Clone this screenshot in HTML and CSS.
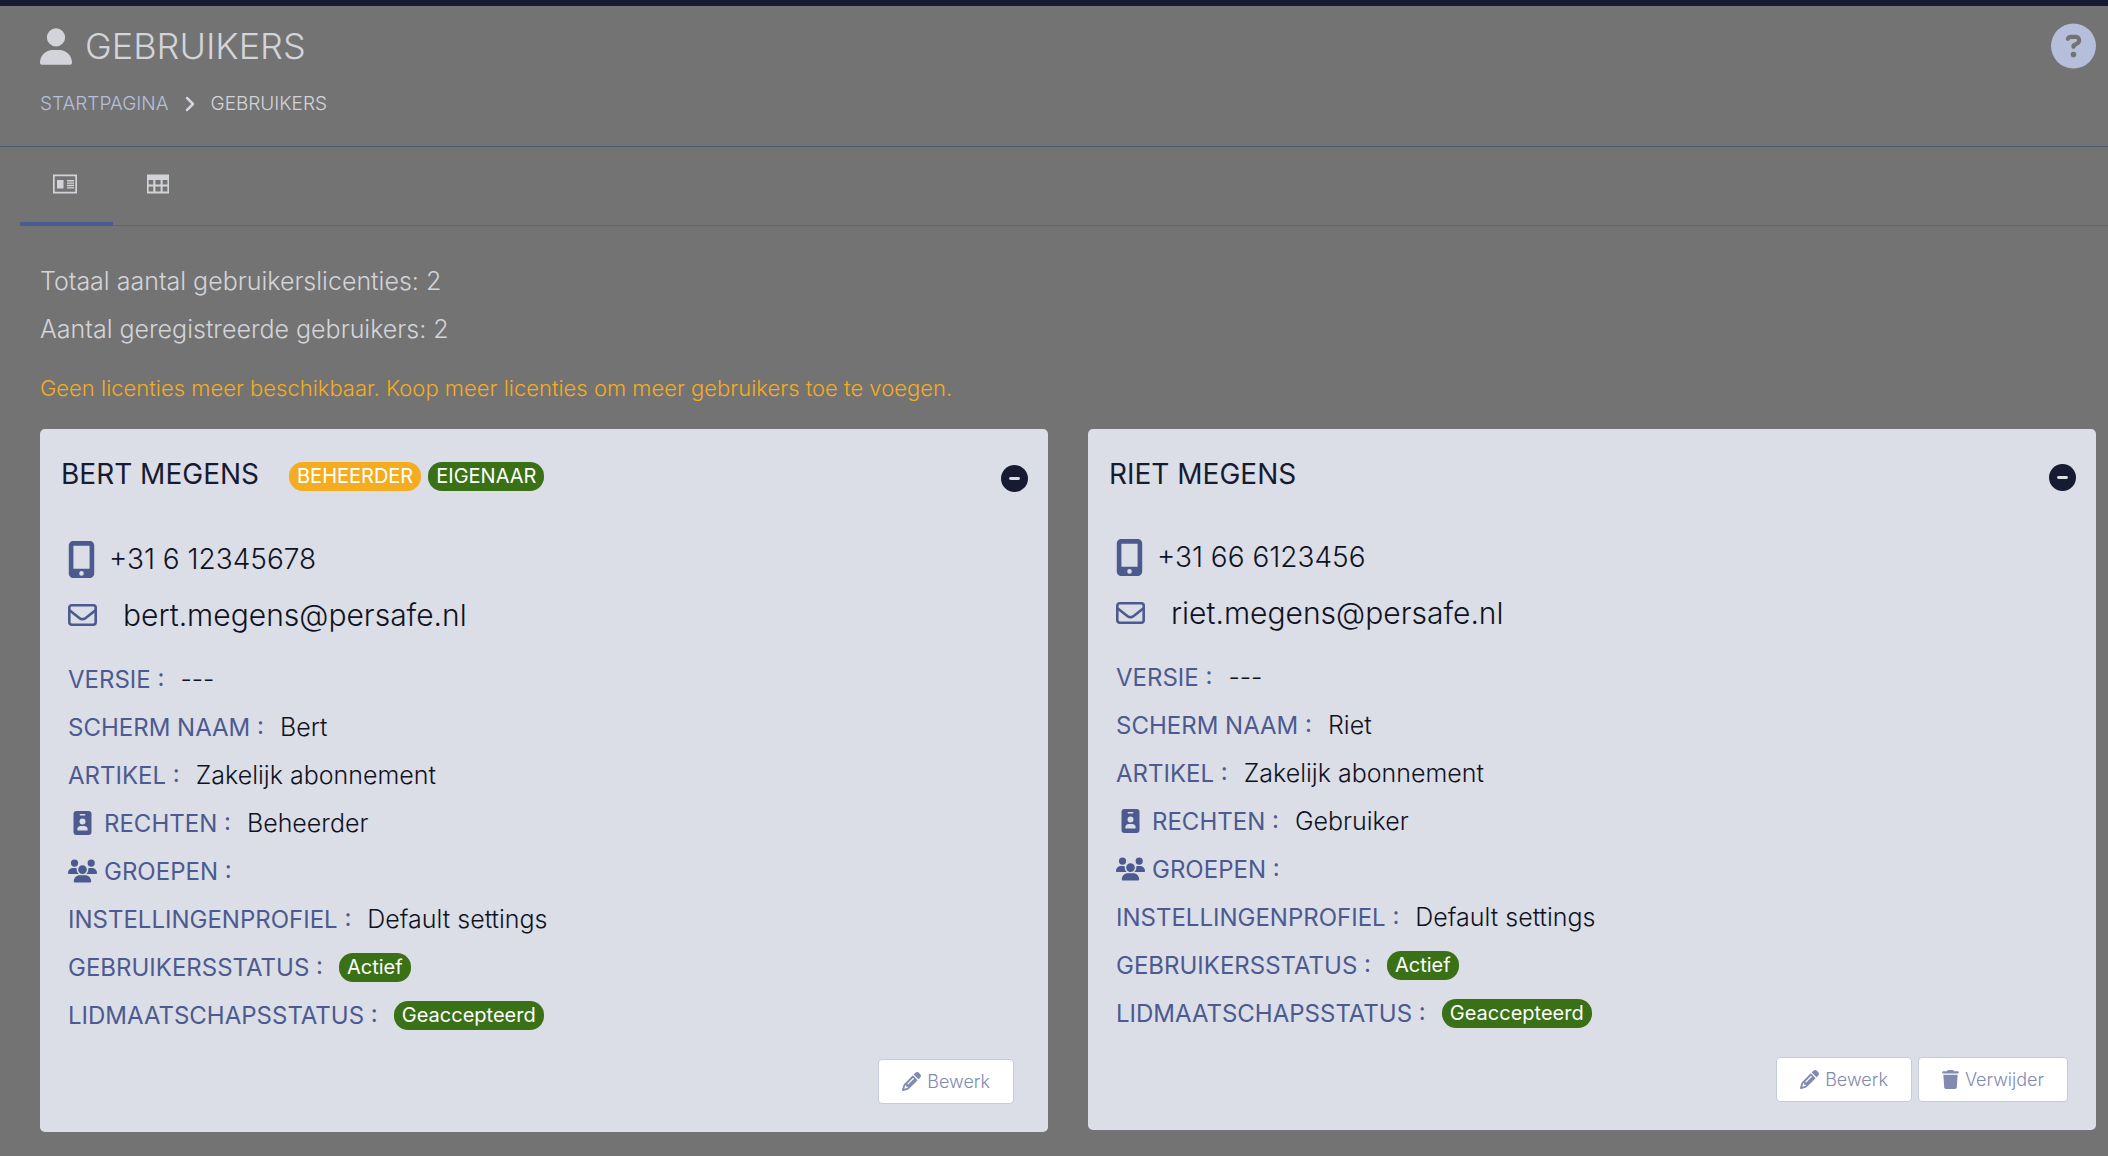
FILE: index.html
```html
<!DOCTYPE html>
<html lang="nl">
<head>
<meta charset="utf-8">
<meta name="viewport" content="width=device-width, initial-scale=1">
<title>Gebruikers</title>
<link rel="stylesheet" href="styles.css">
</head>
<body>
<svg class="sprite" aria-hidden="true">
  <symbol id="user" viewBox="0 0 448 512"><path d="M224 256A128 128 0 1 0 224 0a128 128 0 1 0 0 256zm-45.7 48C79.800 304 0 383.800 0 482.300C0 498.700 13.300 512 29.700 512H418.300c16.400 0 29.700-13.300 29.700-29.700C448 383.800 368.200 304 269.700 304H178.300z"/></symbol>
  <symbol id="help" viewBox="0 0 512 512"><path fill-rule="evenodd" d="M256 512A256 256 0 1 0 256 0a256 256 0 1 0 0 512zM169.800 165.300c7.900-22.300 29.100-37.300 52.800-37.300h58.300c34.900 0 63.100 28.300 63.100 63.100c0 22.600-12.100 43.500-31.700 54.800L280 264.400c-.2 13-10.900 23.600-24 23.600c-13.300 0-24-10.700-24-24V250.500c0-8.600 4.600-16.500 12.100-20.800l44.300-25.400c4.700-2.700 7.600-7.700 7.600-13.100c0-8.400-6.800-15.100-15.100-15.100H222.600c-3.400 0-6.400 2.100-7.500 5.300l-.4 1.200c-4.400 12.500-18.200 19-30.600 14.600s-19-18.200-14.600-30.600l.3-1.200zM224 352a32 32 0 1 1 64 0 32 32 0 1 1 -64 0z"/></symbol>
  <symbol id="chevron" viewBox="0 0 10 16"><path d="M2 2l6 6-6 6" fill="none" stroke="currentColor" stroke-width="2.500" stroke-linecap="round" stroke-linejoin="round"/></symbol>
  <symbol id="cards" viewBox="0 0 24 20"><path fill-rule="evenodd" d="M0 .500h24v19H0zM1.700 2.200v15.600h20.600V2.200z"/><path d="M4 6h6.500v8.500H4zM14 6h7v1.400h-7zM14 8.400h7v1.400h-7zM14 10.800h7v1.400h-7zM14 13.200h7v1.400h-7z"/></symbol>
  <symbol id="table" viewBox="0 0 22 20"><path fill-rule="evenodd" d="M0 .500h22v19H0zM1.600 6v4.600h4.700V6zM8.400 6v4.600h5.200V6zM15.600 6v4.600h4.800V6zM1.600 12.400v5h4.700v-5zM8.400 12.400v5h5.200v-5zM15.600 12.400v5h4.800v-5z"/></symbol>
  <symbol id="minus" viewBox="0 0 27 27"><circle cx="13.500" cy="13.500" r="13.500"/><path d="M9.500 13.500h8" stroke="#dbdee7" stroke-width="2.800" stroke-linecap="round"/></symbol>
  <symbol id="mobile" viewBox="16 0 352 512"><path fill-rule="evenodd" d="M16 64C16 28.700 44.700 0 80 0H304c35.300 0 64 28.700 64 64V448c0 35.300-28.700 64-64 64H80c-35.300 0-64-28.700-64-64V64zM224 448a32 32 0 1 0 -64 0 32 32 0 1 0 64 0zM304 64H80V384H304V64z"/></symbol>
  <symbol id="mail" viewBox="0 0 29 22"><g fill="none" stroke="currentColor" stroke-width="2.600" stroke-linejoin="round"><rect x="1.300" y="1.300" width="26.400" height="19.400" rx="2.400"/><path d="M1.500 6.200l9.800 7.700q3.200 2.500 6.400 0l9.800-7.700"/></g></symbol>
  <symbol id="badge" viewBox="0 0 18 24"><path fill-rule="evenodd" d="M3 0h12a3 3 0 0 1 3 3v18a3 3 0 0 1-3 3H3a3 3 0 0 1-3-3V3a3 3 0 0 1 3-3zM6.800 2.900a.75.750 0 0 0 0 1.500h4.400a.75.750 0 0 0 0-1.500zM9 7.500a3 3 0 1 0 0 6 3 3 0 0 0 0-6zM7.500 15a3.700 3.700 0 0 0-3.700 3.700c0 .4.300.7.700.7h9c.4 0 .7-.3.700-.7a3.700 3.700 0 0 0-3.700-3.700z"/></symbol>
  <symbol id="users" viewBox="0 0 640 512"><path d="M144 0a80 80 0 1 1 0 160A80 80 0 1 1 144 0zM512 0a80 80 0 1 1 0 160A80 80 0 1 1 512 0zM0 298.700C0 239.800 47.800 192 106.700 192h42.700c15.900 0 31 3.500 44.600 9.700c-1.300 7.200-1.900 14.700-1.900 22.300c0 38.200 16.800 72.500 43.300 96H21.300C9.600 320 0 310.400 0 298.700zM404.600 320c26.600-23.500 43.300-57.800 43.300-96c0-7.600-.7-15-1.900-22.300c13.600-6.300 28.700-9.700 44.600-9.700h42.700C592.200 192 640 239.800 640 298.700c0 11.800-9.600 21.300-21.300 21.300zM224 224a96 96 0 1 1 192 0 96 96 0 1 1 -192 0zM128 485.300C128 411.700 187.700 352 261.300 352H378.700C452.300 352 512 411.700 512 485.300c0 14.700-11.900 26.700-26.700 26.700H154.700c-14.700 0-26.700-11.900-26.700-26.700z"/></symbol>
  <symbol id="pencil" viewBox="0 0 512 512"><path fill-rule="evenodd" d="M410.300 231l11.300-11.300-33.900-33.900-62.100-62.100L291.700 89.800l-11.300 11.300-22.600 22.600L58.600 322.900c-10.400 10.400-18 23.300-22.200 37.400L1 480.700c-2.500 8.400-.2 17.500 6.100 23.700s15.300 8.500 23.700 6.100l120.300-35.400c14.100-4.200 27-11.800 37.400-22.200L387.700 253.700 410.300 231zM160 399.400l-9.100 22.700c-4 3.100-8.500 5.400-13.300 6.900L59.400 452l23-78.100c1.400-4.900 3.800-9.400 6.900-13.300l22.700-9.100v32c0 8.800 7.200 16 16 16h32zM362.700 18.700L348.300 33.200 325.700 55.800 314.300 67.100l33.900 33.900 62.100 62.100 33.900 33.900 11.300-11.300 22.600-22.600 14.500-14.500c25-25 25-65.500 0-90.500L453.300 18.700c-25-25-65.500-25-90.500 0zm-47.400 168l-144 144c-6.200 6.200-16.400 6.200-22.600 0s-6.200-16.400 0-22.600l144-144c6.200-6.200 16.400-6.200 22.600 0s6.200 16.400 0 22.600z"/></symbol>
  <symbol id="trash" viewBox="0 0 448 512"><path d="M135.200 17.700C140.600 6.800 151.700 0 163.800 0H284.200c12.100 0 23.200 6.800 28.600 17.700L320 32h96c17.700 0 32 14.300 32 32s-14.300 32-32 32H32C14.300 96 0 81.700 0 64S14.300 32 32 32h96l7.200-14.300zM32 128H416L394.800 467c-1.600 25.300-22.600 45-47.900 45H101.100c-25.300 0-46.300-19.700-47.900-45L32 128z"/></symbol>
</svg>

<header class="page-header">
  <div class="heading">
    <h1><svg class="icon-user"><use href="#user"/></svg>GEBRUIKERS</h1>
    <nav class="breadcrumb" aria-label="Kruimelpad">
      <a href="#">STARTPAGINA</a>
      <svg class="icon-chevron"><use href="#chevron"/></svg>
      <span aria-current="page">GEBRUIKERS</span>
    </nav>
  </div>
  <button class="help" type="button" aria-label="Help"><svg><use href="#help"/></svg></button>
</header>

<div class="tabs" role="tablist">
  <button class="tab active" type="button" role="tab" aria-selected="true" aria-label="Kaarten"><svg class="icon-cards"><use href="#cards"/></svg></button>
  <button class="tab" type="button" role="tab" aria-selected="false" aria-label="Tabel"><svg class="icon-table"><use href="#table"/></svg></button>
</div>

<main>
  <p class="count">Totaal aantal gebruikerslicenties: 2</p>
  <p class="count">Aantal geregistreerde gebruikers: 2</p>
  <p class="warning">Geen licenties meer beschikbaar. Koop meer licenties om meer gebruikers toe te voegen.</p>

  <div class="cards">
    <article class="card">
      <header class="card-header">
        <h2>BERT MEGENS</h2>
        <div class="roles"><span class="pill admin">BEHEERDER</span><span class="pill">EIGENAAR</span></div>
        <button class="collapse" type="button" aria-label="Inklappen"><svg><use href="#minus"/></svg></button>
      </header>
      <div class="contact"><svg class="icon-mobile"><use href="#mobile"/></svg><span>+31 6 12345678</span></div>
      <div class="contact email"><svg class="icon-mail"><use href="#mail"/></svg><span>bert.megens@persafe.nl</span></div>
      <dl>
        <div><dt>VERSIE :</dt><dd>---</dd></div>
        <div><dt>SCHERM NAAM :</dt><dd>Bert</dd></div>
        <div><dt>ARTIKEL :</dt><dd>Zakelijk abonnement</dd></div>
        <div><dt><svg class="icon-badge"><use href="#badge"/></svg>RECHTEN :</dt><dd>Beheerder</dd></div>
        <div><dt><svg class="icon-users"><use href="#users"/></svg>GROEPEN :</dt><dd></dd></div>
        <div><dt>INSTELLINGENPROFIEL :</dt><dd>Default settings</dd></div>
        <div><dt>GEBRUIKERSSTATUS :</dt><dd><span class="pill">Actief</span></dd></div>
        <div><dt>LIDMAATSCHAPSSTATUS :</dt><dd><span class="pill">Geaccepteerd</span></dd></div>
      </dl>
      <footer class="actions single">
        <button class="action" type="button"><svg class="icon-pencil"><use href="#pencil"/></svg>Bewerk</button>
      </footer>
    </article>

    <article class="card">
      <header class="card-header">
        <h2>RIET MEGENS</h2>
        <button class="collapse" type="button" aria-label="Inklappen"><svg><use href="#minus"/></svg></button>
      </header>
      <div class="contact"><svg class="icon-mobile"><use href="#mobile"/></svg><span>+31 66 6123456</span></div>
      <div class="contact email"><svg class="icon-mail"><use href="#mail"/></svg><span>riet.megens@persafe.nl</span></div>
      <dl>
        <div><dt>VERSIE :</dt><dd>---</dd></div>
        <div><dt>SCHERM NAAM :</dt><dd>Riet</dd></div>
        <div><dt>ARTIKEL :</dt><dd>Zakelijk abonnement</dd></div>
        <div><dt><svg class="icon-badge"><use href="#badge"/></svg>RECHTEN :</dt><dd>Gebruiker</dd></div>
        <div><dt><svg class="icon-users"><use href="#users"/></svg>GROEPEN :</dt><dd></dd></div>
        <div><dt>INSTELLINGENPROFIEL :</dt><dd>Default settings</dd></div>
        <div><dt>GEBRUIKERSSTATUS :</dt><dd><span class="pill">Actief</span></dd></div>
        <div><dt>LIDMAATSCHAPSSTATUS :</dt><dd><span class="pill">Geaccepteerd</span></dd></div>
      </dl>
      <footer class="actions">
        <button class="action" type="button"><svg class="icon-pencil"><use href="#pencil"/></svg>Bewerk</button>
        <button class="action" type="button"><svg class="icon-trash"><use href="#trash"/></svg>Verwijder</button>
      </footer>
    </article>
  </div>
</main>
</body>
</html>
```
FILE: styles.css
```css
* {
  box-sizing: border-box;
}

body {
  margin: 0;
  border-top: 6px solid #171b31;
  background: #737373;
  color: #d3d4d9;
  font-family: Inter, "Liberation Sans", sans-serif;
  font-weight: 300;
}

h1, h2, p, dl, dd {
  margin: 0;
  font-weight: 300;
}

button {
  font: inherit;
  cursor: pointer;
}

svg {
  display: block;
  flex: none;
  fill: currentColor;
}

.sprite {
  display: none;
}

/* Page header */
.page-header {
  display: flex;
  justify-content: space-between;
  align-items: flex-start;
  padding: 16px 12px 28px 40px;
  border-bottom: 1px solid #4d5c6b;
}

h1 {
  display: flex;
  align-items: center;
  gap: 13px;
  font-size: 36px;
  line-height: 48px;
}

.icon-user {
  width: 32px;
  height: 37px;
}

.breadcrumb {
  display: flex;
  align-items: center;
  gap: 16px;
  margin-top: 19px;
  font-size: 19px;
  line-height: 29px;
}

.breadcrumb a {
  color: #b5bfdb;
  text-decoration: none;
}

.icon-chevron {
  width: 10px;
  height: 16px;
}

.help {
  margin-top: 1px;
  padding: 0;
  border: 0;
  background: none;
  color: #b5bfdb;
}

.help svg {
  width: 45px;
  height: 46px;
}

/* Tabs */
.tabs {
  display: flex;
  margin-left: 20px;
  border-bottom: 1px solid #656565;
}

.tab {
  display: flex;
  justify-content: center;
  width: 93px;
  margin-bottom: -1px;
  padding: 27px 3px 28px 0;
  border: 0;
  border-bottom: 4px solid transparent;
  background: none;
  color: #d3d4d9;
}

.tab.active {
  border-bottom-color: #4c5a8f;
}

.icon-cards {
  width: 24px;
  height: 20px;
}

.icon-table {
  width: 22px;
  height: 20px;
}

/* License summary */
main {
  padding: 31px 12px 24px 40px;
}

.count {
  font-size: 25px;
  line-height: 48px;
}

.warning {
  margin: 20px 0 26px;
  color: #f4ac20;
  font-size: 22px;
  line-height: 30px;
}

/* User cards */
.cards {
  display: grid;
  grid-template-columns: 1fr 1fr;
  align-items: start;
  gap: 40px;
}

.card {
  padding: 31px 20px 28px 28px;
  border-radius: 5px;
  background: #dbdee7;
  color: #10131f;
}

.card-header {
  display: flex;
  align-items: center;
  margin: 0 0 38px -7px;
  color: #171b31;
}

.card-header h2 {
  align-self: flex-start;
  font-size: 28px;
  font-weight: 400;
  line-height: 28px;
}

.roles {
  display: flex;
  gap: 7px;
  margin: 2px 0 2px 30px;
}

.pill {
  display: inline-block;
  padding: 0 8px;
  border-radius: 14px;
  background: #3a7016;
  color: #fff;
  font-size: 20px;
  font-weight: 400;
  line-height: 29px;
}

.pill.admin {
  background: #f4ac20;
}

.collapse {
  margin: 4px 0 0 auto;
  padding: 0;
  border: 0;
  background: none;
  color: #171b31;
}

.collapse svg {
  width: 27px;
  height: 27px;
}

.contact {
  display: flex;
  align-items: center;
  gap: 14px;
  height: 56px;
  font-size: 28px;
}

.contact svg {
  color: #4c5a8f;
}

.icon-mobile {
  width: 27px;
  height: 37px;
}

.email {
  gap: 26px;
  font-size: 30px;
}

.icon-mail {
  width: 29px;
  height: 22px;
}

dl {
  margin-top: 12px;
  font-size: 24px;
}

dl > div {
  display: flex;
  align-items: center;
  gap: 16px;
  height: 48px;
}

dt {
  display: flex;
  align-items: center;
  gap: 7px;
  color: #4c5a8f;
  font-weight: 400;
}

dd {
  font-size: 25px;
}

dd .pill {
  display: block;
}

.icon-badge {
  width: 29px;
  height: 24px;
}

.icon-users {
  width: 29px;
  height: 24px;
}

.actions {
  display: flex;
  justify-content: flex-end;
  gap: 6px;
  margin: 20px 8px 0 0;
}

.actions.single {
  margin-right: 14px;
}

.action {
  display: flex;
  align-items: center;
  gap: 6px;
  height: 45px;
  padding: 0 23px;
  border: 1px solid #c5cadb;
  border-radius: 4px;
  background: #fff;
  color: #818ab0;
  font-size: 18px;
}

.icon-pencil {
  width: 19px;
  height: 19px;
}

.icon-trash {
  width: 17px;
  height: 19px;
}
```
